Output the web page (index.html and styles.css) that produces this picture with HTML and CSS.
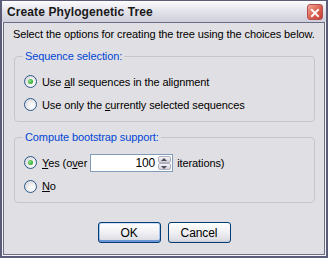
FILE: index.html
```html
<!DOCTYPE html>
<html>
<head>
<meta charset="utf-8">
<link rel="stylesheet" href="styles.css">
</head>
<body>
<div class="window">
  <div class="titlebar">
    <span class="title">Create Phylogenetic Tree</span>
    <span class="close">
      <svg width="16" height="16" viewBox="0 0 16 16">
        <path d="M4.5 4.5 L11.5 11.5 M11.5 4.5 L4.5 11.5" stroke="#fff" stroke-width="2.2" stroke-linecap="square"/>
      </svg>
    </span>
  </div>
  <div class="frame">
    <div class="client">
      <p class="intro">Select the options for creating the tree using the choices below.</p>
      <div class="group g1">
        <span class="legend">Sequence selection:</span>
        <div class="row"><span class="radio on"></span><span>Use <u>a</u>ll sequences in the alignment</span></div>
        <div class="row"><span class="radio"></span><span>Use only the <u>c</u>urrently selected sequences</span></div>
      </div>
      <div class="group g2">
        <span class="legend">Compute bootstrap support:</span>
        <div class="row"><span class="radio on"></span><span><u>Y</u>es (o<u>v</u>er</span>
          <span class="spin"><span class="val">100</span><span class="arrows"><span class="up"></span><span class="dn"></span></span></span>
          <span>iterations)</span></div>
        <div class="row r2"><span class="radio"></span><span><u>N</u>o</span></div>
      </div>
      <div class="buttons">
        <span class="btn def">OK</span>
        <span class="btn">Cancel</span>
      </div>
    </div>
  </div>
</div>
</body>
</html>
```
FILE: styles.css
```css
html, body { margin: 0; padding: 0; }
body { width: 328px; height: 258px; overflow: hidden; font-family: "Liberation Sans", Arial, sans-serif; font-size: 11px; color: #000; letter-spacing: -0.1px; }
.window { width: 328px; height: 258px; box-sizing: border-box; border: 2px solid #5d5c78; border-top: 1px solid #5d5c78; display: flex; flex-direction: column; background: #e0dfe3; }
.titlebar { height: 21px; flex: none; display: flex; align-items: center; padding: 0 3px 0 5px; background: linear-gradient(#fdfdfe 0%, #e4e4ec 45%, #cfcfdb 100%); }
.title { flex: 1; font-weight: bold; font-size: 12px; color: #1a1a1a; letter-spacing: 0.1px; }
.close { width: 16px; height: 16px; box-sizing: border-box; border: 1px solid #b05050; border-radius: 3px; background: linear-gradient(135deg, #f4a898, #dc6454 50%, #c43e34); display: flex; margin-top: 1px; }
.frame { flex: 1; border: 1px solid #f6f6f9; border-top: none; display: flex; }
.client { flex: 1; border: 1px solid #6c6c88; display: flex; flex-direction: column; background: #e0dfe3; }
.intro { margin: 5px 0 0 9px; line-height: 13px; }
.group { position: relative; margin: 15px 9px 0 10px; border: 1px solid #c6c6ca; border-radius: 4px; padding: 13px 0 0 9px; box-sizing: border-box; height: 66px; }
.legend { position: absolute; left: 8px; top: -7px; padding: 0 2px; background: #e0dfe3; color: #0046d5; line-height: 13px; }
.row { height: 23px; display: flex; align-items: center; }
.r2 { height: 24px; }
.radio { width: 13px; height: 13px; box-sizing: border-box; border-radius: 50%; border: 1px solid #2c5a8a; background: radial-gradient(circle at 65% 65%, #ffffff 0%, #f2f2f2 35%, #cdcdd6 100%); margin-right: 5px; position: relative; }
.radio.on::after { content: ""; position: absolute; left: 3px; top: 3px; width: 5px; height: 5px; border-radius: 50%; background: radial-gradient(circle at 40% 40%, #8fe88a, #2fa52c 70%); }
u { text-decoration: underline; text-underline-offset: 1px; }
.spin { display: inline-flex; width: 83px; height: 18px; box-sizing: border-box; border: 1px solid #7f9db9; background: #fff; margin: 0 4px 0 3px; align-items: stretch; }
.val { flex: 1; text-align: right; padding-right: 2px; line-height: 16px; font-size: 12px; }
.arrows { width: 13px; display: flex; flex-direction: column; padding: 1px; }
.up, .dn { flex: 1; box-sizing: border-box; border: 1px solid #b0b0bc; border-radius: 2px; background: linear-gradient(#f4f4f8, #d0d0da); position: relative; }
.up::after { content: ""; position: absolute; left: 2px; top: 1px; border: 3px solid transparent; border-bottom: 3px solid #4d4d5a; border-top: none; }
.dn::after { content: ""; position: absolute; left: 2px; top: 2px; border: 3px solid transparent; border-top: 3px solid #4d4d5a; border-bottom: none; }
.buttons { display: flex; justify-content: center; gap: 7px; margin-top: 19px; }
.btn { width: 63px; height: 21px; box-sizing: border-box; border: 1px solid #003c74; border-radius: 3px; background: linear-gradient(#ffffff, #f0f0f4 50%, #dcdce4 90%, #c8c8d4); display: flex; align-items: center; justify-content: center; font-size: 12px; }
.btn.def { box-shadow: inset 0 -2px 0 #6a96d8, inset 1px 0 0 #a8c4ec, inset -1px 0 0 #a8c4ec, inset 0 1px 0 #cfe0f8; }
```
